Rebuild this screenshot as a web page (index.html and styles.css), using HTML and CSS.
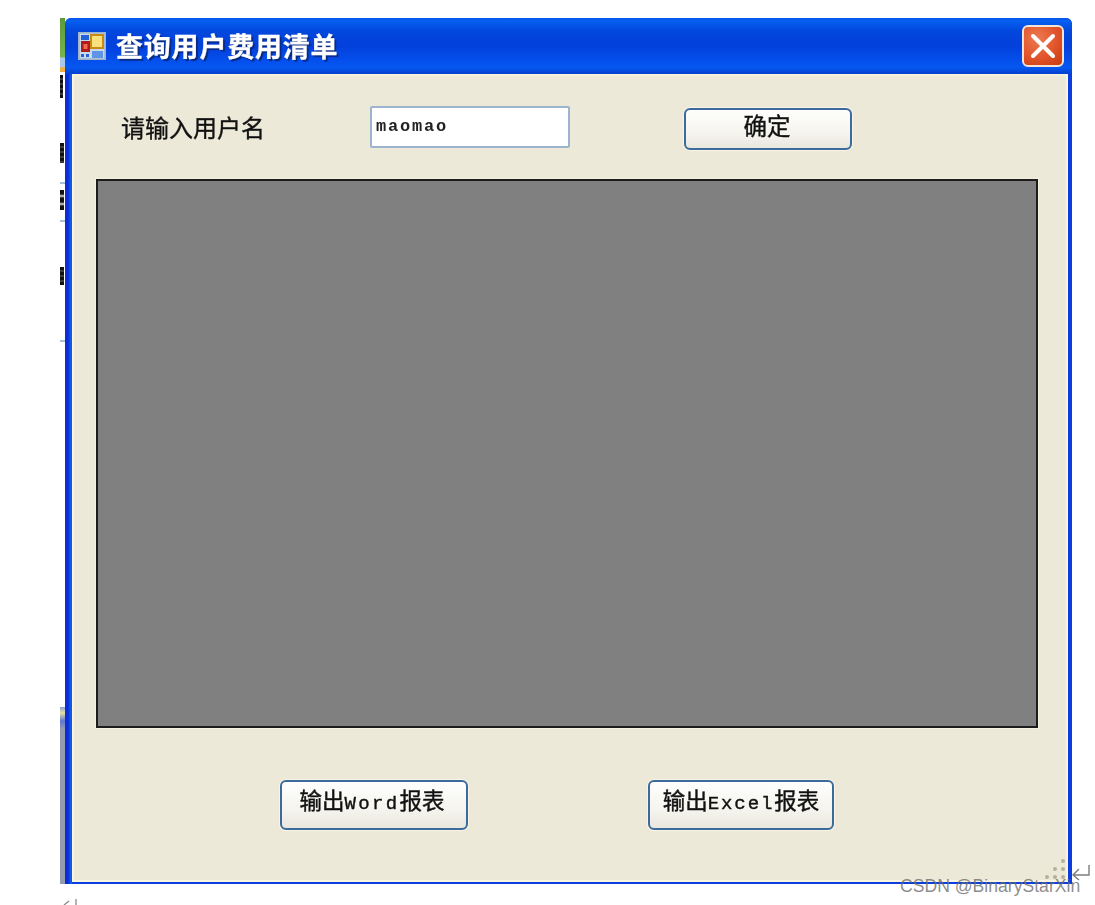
FILE: index.html
```html
<!DOCTYPE html>
<html lang="zh-CN">
<head>
<meta charset="utf-8">
<title>查询用户费用清单</title>
<link rel="stylesheet" href="styles.css">
</head>
<body>
<div class="desktop">
  <div class="sliver">
    <i class="mark mark-a"></i><i class="mark mark-b"></i><i class="mark mark-c"></i><i class="mark mark-d"></i>
    <i class="tick tick-a"></i><i class="tick tick-b"></i><i class="tick tick-c"></i>
    <div class="sliver-top"></div>
    <div class="sliver-mid"></div>
    <div class="sliver-bot"></div>
  </div>
  <div class="window">
    <header class="titlebar">
      <svg class="app-icon" width="28" height="28" viewBox="0 0 28 28">
        <rect x="0.5" y="0.5" width="27" height="27" fill="#a9bfd8" stroke="#9fb2c9"/>
        <rect x="2" y="2" width="24" height="24" fill="#c9d9ec"/>
        <rect x="3" y="3" width="8" height="5" fill="#2462d8"/>
        <rect x="3" y="9" width="9" height="11" fill="#b01c18"/>
        <rect x="5.500" y="12" width="4" height="5" fill="#ef6a50"/>
        <rect x="12" y="2" width="14" height="15" fill="#c98a10"/>
        <rect x="14" y="4" width="10" height="11" fill="#fbe07e"/>
        <rect x="3" y="22" width="3" height="3" fill="#2462d8"/>
        <rect x="8" y="22" width="3" height="3" fill="#2462d8"/>
        <rect x="14" y="19" width="11" height="7" fill="#5f94e6"/>
      </svg>
      <h1 class="title">查询用户费用清单</h1>
      <button class="close" type="button" aria-label="关闭">
        <svg width="30" height="30" viewBox="0 0 30 30">
          <path d="M5 5 L25 25 M25 5 L5 25" stroke="#fff" stroke-width="4" stroke-linecap="round"/>
        </svg>
      </button>
    </header>
    <main class="client">
      <div class="query-row">
        <label class="label">请输入用户名</label>
        <div class="input">maomao</div>
        <button class="btn btn-ok" type="button">确定</button>
      </div>
      <div class="grid-panel"></div>
      <div class="export-row">
        <button class="btn btn-word" type="button">输出<span class="latin">Word</span>报表</button>
        <button class="btn btn-excel" type="button">输出<span class="latin">Excel</span>报表</button>
      </div>
      <div class="grip">
        <i></i><i></i><i></i><i></i><i></i><i></i>
      </div>
    </main>
  </div>
  <svg class="return-mark" width="20" height="18" viewBox="0 0 20 18">
    <path d="M18 1 V11 H2 M8 5 L2 11 L8 16" fill="none" stroke="#7d7d7d" stroke-width="1.4"/>
  </svg>
  <svg class="return-mark-low" width="18" height="6" viewBox="0 0 18 6">
    <path d="M13 0 V6 M1 6 L6 2" fill="none" stroke="#8a8a8a" stroke-width="1.3"/>
  </svg>
  <div class="watermark">CSDN @BinaryStarXin</div>
</div>
</body>
</html>
```

FILE: styles.css
```css
html, body {
  margin: 0;
  padding: 0;
  background: #fff;
}

.desktop {
  position: relative;
  width: 1095px;
  height: 905px;
  overflow: hidden;
  box-sizing: border-box;
  padding: 18px 0 0 60px;
  display: flex;
  align-items: flex-start;
  font-family: "Noto Sans CJK SC", "Liberation Sans", sans-serif;
}

.sliver {
  position: relative;
  width: 5px;
  height: 866px;
  display: flex;
  flex-direction: column;
  background: #fff;
}
.sliver-top {
  height: 54px;
  background: linear-gradient(#5d9a3a, #7ab351 72%, #a9c8ea 74%, #a9c8ea 90%, #f0b040 92%, #f0b040);
}
.sliver-mid {
  height: 635px;
  background: #fff;
}
.sliver-bot {
  flex: 1;
  background: linear-gradient(#8f9fe0 0, #e7dfa0 6px, #5f78cf 14px, #959cb0 22px);
}
.mark {
  position: absolute;
  z-index: 1;
  left: 0;
  width: 4px;
  background: repeating-linear-gradient(#111 0, #111 3px, #666 4px, #111 5px);
  filter: blur(0.7px);
}
.mark-a { top: 57px; height: 23px; width: 3px; }
.mark-b { top: 125px; height: 20px; }
.mark-c { top: 172px; height: 20px; background: repeating-linear-gradient(#111 0, #111 4px, #ddd 6px, #111 8px); }
.mark-d { top: 249px; height: 18px; }
.tick {
  position: absolute;
  z-index: 1;
  left: 0;
  width: 5px;
  height: 2px;
  background: #a9bedb;
}
.tick-a { top: 164px; }
.tick-b { top: 202px; }
.tick-c { top: 322px; }

.window {
  width: 1007px;
  height: 866px;
  box-sizing: border-box;
  display: flex;
  flex-direction: column;
  background: linear-gradient(to right, #0a2ed8 0, #0a2ed8 3px, #1560f0 6px, #0a3ee0 8px);
  border-radius: 6px 6px 0 0;
  overflow: hidden;
}

.titlebar {
  height: 56px;
  flex: none;
  box-sizing: border-box;
  display: flex;
  align-items: center;
  padding: 0 8px 0 13px;
  background: linear-gradient(#0a55e6 0, #0560f2 5%, #0348dc 22%, #0340dc 50%, #0550ee 78%, #0558f0 88%, #0340d0 100%);
}

.app-icon {
  flex: none;
  filter: blur(0.7px);
}

.title {
  margin: 0 0 2px 10px;
  flex: 1;
  font-size: 27px;
  line-height: 1;
  font-weight: 700;
  letter-spacing: 0.8px;
  color: #fff;
  -webkit-text-stroke: 0.3px #fff;
  text-shadow: 2px 2px 1px #0a2a80;
  filter: blur(0.4px);
}

.close {
  flex: none;
  width: 42px;
  height: 42px;
  padding: 0;
  display: flex;
  align-items: center;
  justify-content: center;
  border: 2px solid #f3e4d4;
  border-radius: 6px;
  background: radial-gradient(circle at 35% 30%, #ee7a50, #e1532a 55%, #c9380f 100%);
  filter: blur(0.4px);
}

.client {
  position: relative;
  flex: none;
  width: 996px;
  height: 808px;
  margin-left: 7px;
  box-sizing: border-box;
  padding: 32px 0 0 24px;
  background: #ece9d8;
  box-shadow: inset 2px 0 0 #faf5df, inset -2px 0 0 #faf5df, inset 0 2px 0 #f7f1dc, inset 0 -2px 0 #faf5df;
}

.query-row {
  display: flex;
  align-items: flex-end;
  padding-left: 25px;
  height: 44px;
}

.label {
  flex: none;
  width: 249px;
  align-self: center;
  margin-bottom: 2px;
  font-size: 24px;
  line-height: 1;
  color: #111;
  -webkit-text-stroke: 0.35px #111;
  filter: blur(0.4px);
}

.input {
  flex: none;
  width: 200px;
  height: 42px;
  margin-bottom: 2px;
  box-sizing: border-box;
  padding: 0 0 1px 4px;
  display: flex;
  align-items: center;
  border: 2px solid #9db4cf;
  border-radius: 2px;
  background: #fff;
  font-family: "Liberation Mono", monospace;
  font-size: 17px;
  font-weight: 700;
  letter-spacing: 1.8px;
  color: #222;
  filter: blur(0.4px);
}

.btn {
  flex: none;
  height: 50px;
  padding: 0;
  box-sizing: border-box;
  border: 2px solid #3c6a9c;
  border-radius: 6px;
  background: linear-gradient(#fefefd, #f5f4ee 60%, #e9e7de);
  box-shadow: 0 0 0 1px #f8f4e6;
  font-family: "Noto Sans CJK SC", sans-serif;
  font-size: 22.5px;
  line-height: 1;
  color: #111;
  -webkit-text-stroke: 0.4px #111;
  white-space: nowrap;
  filter: blur(0.35px);
}

.btn-ok {
  width: 168px;
  height: 42px;
  margin-left: 114px;
  padding: 0 2px 6px 0;
  font-size: 23.5px;
}

.latin {
  font-family: "Liberation Mono", monospace;
  font-size: 19px;
  font-weight: 400;
}
.btn-word .latin { letter-spacing: 2.3px; }
.btn-excel .latin { letter-spacing: 1.9px; }

.grid-panel {
  width: 942px;
  height: 549px;
  margin-top: 29px;
  box-sizing: border-box;
  border: 2px solid #1c1c1c;
  background: #808080;
  box-shadow: 0 0 0 1px #f5f1df;
}

.export-row {
  display: flex;
  gap: 180px;
  margin: 52px 0 0 184px;
}
.btn-word { width: 188px; padding: 0 4px 8px 0; }
.btn-excel { width: 186px; padding: 0 0 8px 0; }

.grip {
  position: absolute;
  right: 3px;
  bottom: 3px;
  width: 24px;
  height: 24px;
  display: grid;
  grid-template-columns: repeat(3, 8px);
  grid-template-rows: repeat(3, 8px);
  justify-items: end;
  align-items: end;
}
.grip i {
  width: 4px;
  height: 4px;
  border-radius: 50%;
  background: #b4b199;
  filter: blur(0.4px);
}
.grip i:nth-child(1) { grid-column: 3; grid-row: 1; }
.grip i:nth-child(2) { grid-column: 2; grid-row: 2; }
.grip i:nth-child(3) { grid-column: 3; grid-row: 2; }
.grip i:nth-child(4) { grid-column: 1; grid-row: 3; }
.grip i:nth-child(5) { grid-column: 2; grid-row: 3; }
.grip i:nth-child(6) { grid-column: 3; grid-row: 3; }

.return-mark {
  position: absolute;
  left: 1071px;
  top: 864px;
}
.return-mark-low {
  position: absolute;
  left: 63px;
  top: 899px;
}

.watermark {
  position: absolute;
  left: 900px;
  top: 876px;
  font-family: "Liberation Sans", Arial, sans-serif;
  font-size: 17.6px;
  line-height: 20px;
  color: rgba(110, 110, 110, 0.8);
  white-space: nowrap;
}
```
